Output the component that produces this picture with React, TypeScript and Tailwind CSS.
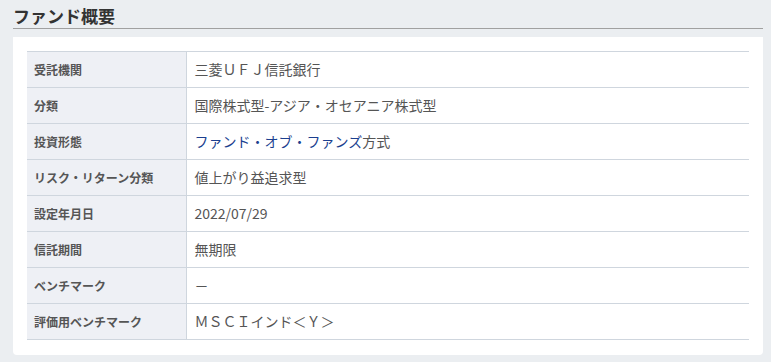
const rows: { label: string; value: React.ReactNode }[] = [
  { label: '受託機関', value: '三菱ＵＦＪ信託銀行' },
  { label: '分類', value: '国際株式型-アジア・オセアニア株式型' },
  {
    label: '投資形態',
    value: (
      <>
        <a href="#" className="text-[#1b3f8f]">
          ファンド・オブ・ファンズ
        </a>
        方式
      </>
    ),
  },
  { label: 'リスク・リターン分類', value: '値上がり益追求型' },
  { label: '設定年月日', value: '2022/07/29' },
  { label: '信託期間', value: '無期限' },
  { label: 'ベンチマーク', value: '－' },
  { label: '評価用ベンチマーク', value: 'ＭＳＣＩインド＜Ｙ＞' },
];

export default function App() {
  return (
    <div
      className="min-h-[362px] w-full bg-[#ebeef1] pl-[13px] pr-[8px] pt-[4px]"
      style={{ fontFamily: '"Noto Sans CJK JP", "Noto Sans", sans-serif' }}
    >
      {/* 見出し */}
      <h2 className="border-b border-[#a0a0a0] pb-[1px] text-[17px] font-bold leading-[23px] text-[#333]">
        ファンド概要
      </h2>

      {/* 概要テーブル */}
      <div className="mt-[8px] rounded-b-[4px] bg-white px-[14px] pb-[15px] pt-[14px]">
        <table className="w-full border-collapse">
          <tbody>
            {rows.map((r) => (
              <tr key={r.label} className="h-[36px] border-y border-[#cfd6de]">
                <th className="w-[159px] border-r border-[#cfd6de] bg-[#eef0f5] pl-[7px] text-left text-[12px] font-bold text-[#555]">
                  {r.label}
                </th>
                <td className="pl-[8px] text-[14px] text-[#555]">{r.value}</td>
              </tr>
            ))}
          </tbody>
        </table>
      </div>
    </div>
  );
}
